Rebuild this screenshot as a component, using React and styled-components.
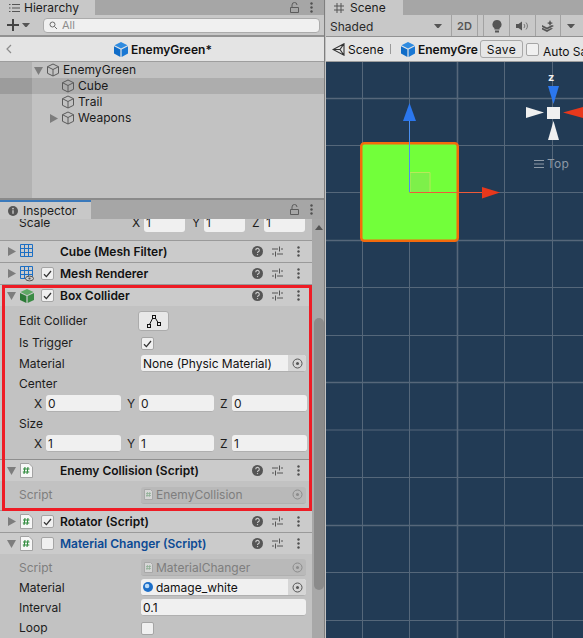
import React from 'react'
import styled, { createGlobalStyle } from 'styled-components'

const Global = createGlobalStyle`
  html, body { margin: 0; padding: 0; background: #c2c2c2; }
  body { font-family: Inter, "Noto Sans", sans-serif; font-size: 12px; color: #111; }
  svg { flex: none; }
`

const Page = styled.div`
  width: 583px;
  height: 638px;
  display: grid;
  grid-template-columns: 325px 1fr;
  overflow: hidden;
`
const LeftPane = styled.div`
  display: flex;
  flex-direction: column;
  height: 638px;
  border-right: 1px solid #7f7f7f;
  box-sizing: content-box;
`
const RightPane = styled.div`
  display: flex;
  flex-direction: column;
  height: 638px;
  margin-left: 1px;
  min-width: 0;
`
const TabStrip = styled.div`
  display: flex;
  align-items: flex-start;
  flex: none;
  height: ${p => p.$h}px;
  background: #a6a6a6;
`
const Tab = styled.div`
  display: flex;
  align-items: center;
  gap: ${p => p.$gap || 4}px;
  width: ${p => p.$w}px;
  height: ${p => p.$h}px;
  box-sizing: border-box;
  padding-left: ${p => p.$pad}px;
  background: #c8c8c8;
  font-size: 12px;
  line-height: 12px;
  color: #1c1c1c;
  border-top: ${p => (p.$active ? '2px solid #3a79bb' : 'none')};
`
const TabTools = styled.div`
  margin-left: auto;
  display: flex;
  align-items: center;
  gap: 11px;
  padding-right: 11px;
  height: 100%;
  color: #555;
`
const Toolbar = styled.div`
  flex: none;
  display: flex;
  align-items: center;
  height: ${p => p.$h}px;
  box-sizing: border-box;
  background: #c8c8c8;
  border-bottom: 2px solid #929292;
`
const PlusBox = styled.div`
  display: flex;
  align-items: center;
  gap: 3px;
  padding-left: 7px;
  width: 43px;
  box-sizing: border-box;
`
const Search = styled.div`
  flex: none;
  width: 277px;
  height: 15px;
  display: flex;
  align-items: center;
  gap: 3px;
  padding-left: 5px;
  box-sizing: border-box;
  background: #f0f0f0;
  border: 1px solid #ababab;
  border-radius: 4px;
  color: #8c8c8c;
  font-size: 11px;
`
const Breadcrumb = styled.div`
  flex: none;
  height: 25px;
  box-sizing: border-box;
  background: #e4e4e4;
  border-bottom: 1px solid #9d9d9d;
  display: flex;
  align-items: center;
`
const CrumbBack = styled.span`
  display: flex;
  padding-left: 6px;
`
const CrumbTitle = styled.div`
  margin-left: 102px;
  display: flex;
  align-items: center;
  gap: 3px;
  font-weight: 600;
  font-size: 12px;
  color: #111;
`
const Tree = styled.div`
  flex: none;
  height: 136px;
  background: linear-gradient(to right, #b2b2b2 32px, #c2c2c2 32px);
`
const TreeRow = styled.div`
  height: 16px;
  display: flex;
  align-items: center;
  padding-left: ${p => p.$indent}px;
  gap: 3px;
  font-size: 12px;
  color: #1a1a1a;
  background: ${p => (p.$selected ? 'linear-gradient(to right, #9c9c9c 32px, #adadad 32px)' : 'transparent')};
`
const TreeLabel = styled.span`
  padding-bottom: 2px;
  letter-spacing: 0.05px;
`
const PaneDivider = styled.div`
  flex: none;
  height: 2px;
  background: #8a8a8a;
`
const InspectorBody = styled.div`
  flex: 1;
  min-height: 0;
  display: grid;
  grid-template-columns: 312px 13px;
  overflow: hidden;
`
const Components = styled.div`
  display: flex;
  flex-direction: column;
  background: #c2c2c2;
`
const Scrollbar = styled.div`
  background: #a8a8a8;
  display: flex;
  flex-direction: column;
  align-items: center;
`
const ScrollArrow = styled.div`
  margin-top: 6px;
  width: 0;
  height: 0;
  border-left: 4px solid transparent;
  border-right: 4px solid transparent;
  border-bottom: 5px solid #555;
`
const ScrollThumb = styled.div`
  margin-top: 88px;
  width: 10px;
  height: 272px;
  border-radius: 5px;
  background: #8b8b8b;
`
const Header = styled.div`
  flex: none;
  height: ${p => (p.$flat ? 21 : 22)}px;
  box-sizing: border-box;
  display: flex;
  align-items: center;
  background: #cbcbcb;
  border-top: ${p => (p.$flat ? 'none' : '1px solid #9a9a9a')};
  margin-top: ${p => p.$mt || 0}px;
`
const Fold = styled.span`
  flex: none;
  width: 20px;
  display: flex;
  justify-content: flex-start;
  padding-left: 7px;
  box-sizing: border-box;
`
const IconSlot = styled.span`
  flex: none;
  width: 21px;
  display: flex;
`
const CheckSlot = styled.span`
  flex: none;
  width: 19px;
  display: flex;
`
const Title = styled.span`
  flex: 1;
  font-weight: 600;
  font-size: 12px;
  color: ${p => p.$color || '#111'};
  white-space: nowrap;
`
const HeaderTools = styled.span`
  display: flex;
  align-items: center;
  gap: 9px;
  padding-right: 7px;
  color: #555;
`
const DotsSlot = styled.span`
  width: 13px;
  display: flex;
  justify-content: center;
`
const Check = styled.span`
  display: inline-flex;
  align-items: center;
  justify-content: center;
  width: 13px;
  height: 13px;
  box-sizing: border-box;
  background: #f0f0f0;
  border: 1px solid #a5a5a5;
  border-radius: 2px;
`
const Row = styled.div`
  flex: none;
  height: ${p => p.$h || 20}px;
  display: flex;
  align-items: center;
  box-sizing: border-box;
  padding-left: 19px;
  color: ${p => (p.$muted ? '#7e7e7e' : '#1c1c1c')};
  margin-top: ${p => p.$mt || 0}px;
`
const Label = styled.span`
  flex: none;
  width: 122px;
  padding-bottom: 2px;
`
const Field = styled.span`
  flex: none;
  width: 165px;
  height: 17px;
  margin-bottom: 1px;
  box-sizing: border-box;
  display: flex;
  align-items: center;
  padding-left: ${p => p.$pad || 2}px;
  background: ${p => (p.$muted ? '#b9b9b9' : '#f0f0f0')};
  border-radius: 3px;
  border-bottom: 1px solid #b0b0b0;
  color: ${p => (p.$muted ? '#7e7e7e' : '#111')};
  overflow: hidden;
  gap: 3px;
`
const Picker = styled.span`
  margin-left: auto;
  flex: none;
  width: 18px;
  height: 100%;
  display: flex;
  align-items: center;
  justify-content: center;
  background: ${p => (p.$muted ? 'transparent' : '#d6d6d6')};
`
const VecRow = styled.div`
  flex: none;
  height: 20px;
  display: flex;
  align-items: center;
  padding-left: 34px;
  color: #1c1c1c;
`
const VecLabel = styled.span`
  flex: none;
  width: 12px;
  padding-bottom: 2px;
`
const VecField = styled.span`
  flex: none;
  width: ${p => p.$w}px;
  margin-right: ${p => p.$mr}px;
  margin-bottom: 1px;
  height: 17px;
  box-sizing: border-box;
  display: flex;
  align-items: center;
  padding-left: 2px;
  background: #f0f0f0;
  border-radius: 3px;
  border-bottom: 1px solid #b0b0b0;
`
const ScaleRow = styled.div`
  flex: none;
  height: 13px;
  display: flex;
  padding-left: 19px;
  color: #1c1c1c;
  line-height: 12px;
`
const ScaleLabel = styled.span`
  width: 115px;
  height: 12px;
  margin-top: -2px;
`
const ScaleField = styled.span`
  flex: none;
  width: ${p => p.$w}px;
  height: 13px;
  margin-right: 7px;
  background: #f0f0f0;
  border-radius: 0 0 3px 3px;
  padding-left: 2px;
  box-sizing: border-box;
`
const ScaleValue = styled.span`
  display: block;
  height: 12px;
  margin-top: -2px;
`
const ScaleAxis = styled.span`
  flex: none;
  width: 12px;
  height: 12px;
  margin-top: -2px;
`
const ColliderButton = styled.span`
  flex: none;
  width: 31px;
  height: 20px;
  margin-left: -3px;
  display: flex;
  align-items: center;
  justify-content: center;
  background: #e8e8e8;
  border: 1px solid #ababab;
  border-radius: 3px;
  box-sizing: border-box;
`
const Separator = styled.div`
  flex: none;
  height: 1px;
  background: #8f8f8f;
  margin-top: 5px;
`
const RedFrame = styled.div`
  position: absolute;
  left: 2px;
  top: 285px;
  width: 310px;
  height: 226px;
  box-sizing: border-box;
  border: 3px solid #ee1c25;
  pointer-events: none;
`
const SceneToolbar = styled.div`
  flex: none;
  height: 22px;
  box-sizing: border-box;
  display: flex;
  align-items: center;
  background: #c8c8c8;
  border-bottom: 1px solid #929292;
`
const ToolCell = styled.span`
  flex: none;
  width: ${p => p.$w}px;
  height: 100%;
  display: flex;
  align-items: center;
  justify-content: ${p => p.$align || 'center'};
  padding-left: ${p => p.$pad || 0}px;
  padding-top: 1px;
  box-sizing: border-box;
  border-right: ${p => (p.$bar ? '1px solid #a2a2a2' : 'none')};
  color: ${p => (p.$bold ? '#555' : '#2a2a2a')};
  font-weight: ${p => (p.$bold ? 600 : 400)};
  font-size: ${p => p.$size || 12}px;
`
const ShadedCaret = styled.span`
  display: flex;
  padding-right: 9px;
`
const SceneCrumb = styled.div`
  flex: none;
  height: 25px;
  box-sizing: border-box;
  display: flex;
  align-items: center;
  background: #e4e4e4;
  border-bottom: 1px solid #9d9d9d;
  white-space: nowrap;
  overflow: hidden;
`
const CrumbIcon = styled.span`
  display: flex;
  flex: none;
  margin-left: ${p => p.$ml}px;
  margin-right: ${p => p.$mr || 0}px;
`
const CrumbLink = styled.span`
  flex: none;
  width: ${p => p.$w}px;
  margin-left: ${p => p.$ml || 0}px;
  font-weight: ${p => (p.$bold ? 600 : 400)};
`
const CrumbBar = styled.span`
  flex: none;
  width: 1px;
  height: 10px;
  background: #9a9a9a;
  margin-left: 8px;
  margin-right: 10px;
`
const SaveButton = styled.span`
  flex: none;
  width: 43px;
  height: 18px;
  margin-left: 2px;
  box-sizing: border-box;
  display: flex;
  align-items: center;
  justify-content: center;
  border: 1px solid #a8a8a8;
  border-radius: 3px;
  background: #e6e6e6;
  letter-spacing: 0.4px;
`
const AutoLabel = styled.span`
  flex: none;
  margin-left: 4px;
  padding-top: 4px;
`
const Canvas = styled.div`
  position: relative;
  flex: 1;
  background: #223b55;
  overflow: hidden;
`
const CanvasArt = styled.svg`
  position: absolute;
  left: 0;
  top: 0;
`
const ViewLabel = styled.span`
  position: absolute;
  left: 208px;
  top: 94px;
  display: flex;
  align-items: center;
  gap: 3px;
  color: #8d99a6;
  letter-spacing: 0.3px;
`
const AxisLetter = styled.span`
  position: absolute;
  left: 222px;
  top: 8px;
  color: #f2f2f2;
  font-size: 11px;
  font-weight: 700;
`

const ListIcon = () => (
  <svg width="12" height="10" viewBox="0 0 12 10" fill="none" stroke="#555" strokeWidth="1">
    <path d="M4 1.5h8M4 5h8M4 8.5h8M1 1.5h1.5M1 5h1.5M1 8.5h1.5" />
  </svg>
)
const Lock = () => (
  <svg width="9" height="11" viewBox="0 0 9 11" fill="none" stroke="#5c5c5c">
    <path d="M.5 5.5h8v5h-8zM2 5.5V3a2.5 2.5 0 0 1 5 0" />
  </svg>
)
const Dots = () => (
  <svg width="3" height="11" viewBox="0 0 3 11" fill="#505050">
    <circle cx="1.5" cy="1.5" r="1.2" />
    <circle cx="1.5" cy="5.5" r="1.2" />
    <circle cx="1.5" cy="9.5" r="1.2" />
  </svg>
)
const Caret = ({ size = 8, color = '#555' }) => (
  <svg width={size} height={size * 0.6} viewBox="0 0 10 6" fill={color}>
    <path d="M0 0h10L5 6z" />
  </svg>
)
const Triangle = ({ open, color = '#7d7d7d' }) => (
  <svg width="9" height="9" viewBox="0 0 9 9" fill={color}>
    {open ? <path d="M0 1h9L4.5 9z" /> : <path d="M1 0l8 4.5L1 9z" />}
  </svg>
)
const BlueCube = () => (
  <svg width="14" height="15" viewBox="0 0 14 15">
    <path d="M7 0l6.5 3.2L7 6.6.5 3.2z" fill="#2f8be0" />
    <path d="M0 4.3l6.4 3.3V15L0 11.6z" fill="#0f6cc8" />
    <path d="M14 4.3L7.6 7.6V15l6.4-3.4z" fill="#1a78d4" />
  </svg>
)
const OutlineCube = () => (
  <svg width="14" height="14" viewBox="0 0 14 14" fill="none" stroke="#5a5a5a" strokeWidth="1">
    <path d="M7 1l5.5 2.7v6.6L7 13 1.5 10.3V3.7zM1.5 3.7L7 6.5l5.5-2.8M7 6.5V13" />
  </svg>
)
const GreenCube = () => (
  <svg width="14" height="14" viewBox="0 0 14 14">
    <path d="M7 0l6.5 3L7 6.2.5 3z" fill="#5fa865" />
    <path d="M0 4l6.4 3.1V14L0 11z" fill="#2c7a37" />
    <path d="M14 4L7.6 7.1V14L14 11z" fill="#3b8c45" />
  </svg>
)
const MeshGrid = ({ eye }) => (
  <svg width="14" height="16" viewBox="0 0 14 16" fill="none" stroke="#1c6fc4" strokeWidth="1">
    <path d="M.5.5h12v12H.5zM.5 4.5h12M.5 8.5h12M4.5.5v12M8.5.5v12" />
    {eye && <ellipse cx="9.5" cy="12.5" rx="4" ry="2.4" fill="#cbcbcb" stroke="#555" />}
    {eye && <circle cx="9.5" cy="12.5" r="1.1" fill="#555" stroke="none" />}
  </svg>
)
const ScriptFile = () => (
  <svg width="13" height="15" viewBox="0 0 13 15">
    <path d="M.5.5h8.5l3.5 3.5v10.5H.5z" fill="#f7f7f7" stroke="#a3a3a3" />
    <path d="M5 4l-1 7M8 4l-1 7M3 6h6.5M2.8 9h6.5" stroke="#2f8a3c" strokeWidth="1.1" fill="none" />
  </svg>
)
const SmallScript = () => (
  <svg width="9" height="11" viewBox="0 0 9 11">
    <path d="M.5.5h6l2 2v8h-8z" fill="#d6d6d6" stroke="#a8a8a8" />
    <path d="M3.5 3l-.6 5M5.8 3l-.6 5M2 4.5h5M2 6.5h5" stroke="#8fb095" strokeWidth=".8" fill="none" />
  </svg>
)
const Help = () => (
  <svg width="11" height="11" viewBox="0 0 11 11">
    <circle cx="5.5" cy="5.5" r="5.5" fill="#555" />
    <path d="M3.7 4.2a1.8 1.8 0 1 1 2.6 1.6c-.6.3-.8.6-.8 1.2" stroke="#cbcbcb" strokeWidth="1.1" fill="none" />
    <circle cx="5.5" cy="8.6" r=".7" fill="#cbcbcb" />
  </svg>
)
const Sliders = () => (
  <svg width="11" height="11" viewBox="0 0 11 11" fill="none" stroke="#555" strokeWidth="1">
    <path d="M0 3h6M9 3h2M7.5 .5v5M0 8h2M5 8h6M3.5 5.5v5" />
  </svg>
)
const HeaderIcons = () => (
  <HeaderTools>
    <Help />
    <Sliders />
    <DotsSlot>
      <Dots />
    </DotsSlot>
  </HeaderTools>
)
const Tick = () => (
  <svg width="9" height="8" viewBox="0 0 9 8" fill="none" stroke="#333" strokeWidth="1.3">
    <path d="M1 4.3L3.4 6.6 8 1" />
  </svg>
)
const PickDot = ({ muted }) => (
  <svg width="11" height="11" viewBox="0 0 11 11" fill="none" stroke={muted ? '#8c8c8c' : '#555'}>
    <circle cx="5.5" cy="5.5" r="4.5" />
    <circle cx="5.5" cy="5.5" r="1.5" fill={muted ? '#8c8c8c' : '#555'} stroke="none" />
  </svg>
)
const ColliderGlyph = () => (
  <svg width="14" height="13" viewBox="0 0 14 13" fill="none" stroke="#111">
    <path d="M2.5 9.5L6 2.5M8 2.5l3 5" />
    <rect x=".5" y="9.5" width="3" height="3" fill="#e8e8e8" />
    <rect x="5.5" y=".5" width="3" height="3" fill="#e8e8e8" />
    <rect x="10.5" y="7.5" width="3" height="3" fill="#e8e8e8" />
  </svg>
)
const MaterialBall = () => (
  <svg width="10" height="10" viewBox="0 0 11 11">
    <circle cx="5.5" cy="5.5" r="5.5" fill="#1d6fc9" />
    <circle cx="4.5" cy="4.5" r="2.5" fill="#bcdcf8" />
  </svg>
)
const PlusGlyph = () => (
  <svg width="12" height="12" viewBox="0 0 12 12" stroke="#444" strokeWidth="2">
    <path d="M6 0v12M0 6h12" />
  </svg>
)
const Magnifier = () => (
  <svg width="10" height="9" viewBox="0 0 10 9" fill="none" stroke="#6a6a6a">
    <circle cx="3.5" cy="3.5" r="2.5" />
    <path d="M5.5 5.5L8 8" />
  </svg>
)
const HashTab = () => (
  <svg width="10" height="10" viewBox="0 0 10 10" stroke="#555" fill="none">
    <path d="M3 0v10M7 0v10M0 3h10M0 7h10" />
  </svg>
)
const InfoTab = () => (
  <svg width="10" height="10" viewBox="0 0 10 10">
    <circle cx="5" cy="5" r="5" fill="#555" />
    <path d="M5 4.3v3.4" stroke="#c8c8c8" strokeWidth="1.4" />
    <circle cx="5" cy="2.6" r=".9" fill="#c8c8c8" />
  </svg>
)
const BackArrow = () => (
  <svg width="6" height="10" viewBox="0 0 6 10" fill="none" stroke="#8c8c8c" strokeWidth="1.2">
    <path d="M5 1L1 5l4 4" />
  </svg>
)
const Bulb = () => (
  <svg width="10" height="13" viewBox="0 0 10 13" fill="#555">
    <path d="M5 0a4.5 4.5 0 0 1 2.6 8.2V9.5H2.4V8.2A4.5 4.5 0 0 1 5 0z" />
    <path d="M3 10.5h4v2H3z" />
  </svg>
)
const Speaker = () => (
  <svg width="13" height="10" viewBox="0 0 13 10" fill="none">
    <path d="M0 3h2.5L6 .5v9L2.5 7H0z" fill="#555" />
    <path d="M8 3a3 3 0 0 1 0 4M10 1.5a5 5 0 0 1 0 7" stroke="#777" />
  </svg>
)
const Stack = () => (
  <svg width="13" height="12" viewBox="0 0 13 12" fill="#555">
    <path d="M0 5l5 2.4L10 5l2 1-7 3.4L0 7z" />
    <path d="M0 8l1 0 4 2 4-2 2 .4L5 12 0 9.5z" />
    <path d="M8 0l1 2.2L11 3 9 4 8 6 7 4 5 3l2-.8z" />
  </svg>
)
const UnityLogo = () => (
  <svg width="13" height="13" viewBox="0 0 13 13" fill="none" stroke="#333" strokeWidth="1.1">
    <path d="M12 .8L1 6.5l11 5.7V.8zM1 6.5h7M12 .8L8 6.5l4 5.7" />
  </svg>
)
const MenuLines = () => (
  <svg width="10" height="8" viewBox="0 0 10 8" stroke="#8d99a6">
    <path d="M0 .5h10M0 4h10M0 7.5h10" />
  </svg>
)

const gridX = [36, 83, 131, 178, 226]
const gridY = [36, 83, 130, 178, 225, 273, 320, 367.5, 415, 463, 510, 558]
const majorX = [131]
const majorY = [36, 178, 320, 463]

// x and y here are canvas coordinates, canvas starts at 326,62
const SceneArt = () => (
  <CanvasArt width="258" height="576" viewBox="0 0 258 576" fill="none">
    {gridX.map(x => (
      <path
        key={x}
        d={`M${x + 0.5} 0V576`}
        stroke={majorX.includes(x) ? '#56677a' : '#55677a'}
        strokeWidth={majorX.includes(x) ? 1.6 : 1}
      />
    ))}
    {gridY.map(y => (
      <path
        key={y}
        d={`M0 ${y + 0.5}H258`}
        stroke={majorY.includes(y) ? '#56677a' : '#55677a'}
        strokeWidth={majorY.includes(y) ? 1.6 : 1}
      />
    ))}
    <rect x="35.25" y="81.25" width="96.5" height="97.5" rx="3" fill="#72ff3a" stroke="#f46a0c" strokeWidth="2.5" />
    <path d="M84 110.5h20v20H84z" fill="#7df04a" stroke="#b9e85a" />
    <path d="M83.5 58v72" stroke="#4b8ff0" />
    <path d="M83.5 130.5H157" stroke="#ee5a3a" />
    <path d="M83.5 41L77 59h13z" fill="#2b77ee" />
    <path d="M174 130.5L156 125v11.500z" fill="#e8381c" />
    <path d="M222 24h11l-5.500 18z" fill="#2b77ee" />
    <path d="M200 45v11l18-5.500z" fill="#f0f0f0" />
    <path d="M257 45v11l-20-5.500z" fill="#e8381c" />
    <path d="M222 78h11l-5.500-19z" fill="#f0f0f0" />
    <rect x="221" y="45" width="13" height="12" fill="#f0f0f0" />
  </CanvasArt>
)

const Vec = ({ values }) => (
  <VecRow>
    <VecLabel>X</VecLabel>
    <VecField $w={75} $mr={6}>{values[0]}</VecField>
    <VecLabel>Y</VecLabel>
    <VecField $w={75} $mr={6}>{values[1]}</VecField>
    <VecLabel>Z</VecLabel>
    <VecField $w={75} $mr={0}>{values[2]}</VecField>
  </VecRow>
)

const CompHeader = ({ open, icon, check, title, color, mt, flat }) => (
  <Header $mt={mt} $flat={flat}>
    <Fold>
      <Triangle open={open} />
    </Fold>
    <IconSlot>{icon}</IconSlot>
    <CheckSlot>
      {check !== undefined && <Check>{check && <Tick />}</Check>}
    </CheckSlot>
    <Title $color={color}>{title}</Title>
    <HeaderIcons />
  </Header>
)

export default function App() {
  return (
    <>
      <Global />
      <Page>
        <LeftPane>
          <TabStrip $h={15}>
            <Tab $w={95} $h={15} $pad={8}>
              <ListIcon />
              Hierarchy
            </Tab>
            <TabTools>
              <Lock />
              <Dots />
            </TabTools>
          </TabStrip>
          <Toolbar $h={22}>
            <PlusBox>
              <PlusGlyph />
              <Caret />
            </PlusBox>
            <Search>
              <Magnifier />
              All
            </Search>
          </Toolbar>
          <Breadcrumb>
            <CrumbBack>
              <BackArrow />
            </CrumbBack>
            <CrumbTitle>
              <BlueCube />
              EnemyGreen*
            </CrumbTitle>
          </Breadcrumb>
          <Tree>
            <TreeRow $indent={34}>
              <Triangle open />
              <OutlineCube />
              <TreeLabel>EnemyGreen</TreeLabel>
            </TreeRow>
            <TreeRow $indent={61} $selected>
              <OutlineCube />
              <TreeLabel>Cube</TreeLabel>
            </TreeRow>
            <TreeRow $indent={61}>
              <OutlineCube />
              <TreeLabel>Trail</TreeLabel>
            </TreeRow>
            <TreeRow $indent={49}>
              <Triangle />
              <OutlineCube />
              <TreeLabel>Weapons</TreeLabel>
            </TreeRow>
          </Tree>
          <PaneDivider />
          <TabStrip $h={19}>
            <Tab $w={91} $h={19} $pad={8} $gap={5} $active>
              <InfoTab />
              Inspector
            </Tab>
            <TabTools>
              <Lock />
              <Dots />
            </TabTools>
          </TabStrip>
          <InspectorBody>
            <Components>
              <ScaleRow>
                <ScaleLabel>Scale</ScaleLabel>
                <ScaleAxis>X</ScaleAxis>
                <ScaleField $w={41}><ScaleValue>1</ScaleValue></ScaleField>
                <ScaleAxis>Y</ScaleAxis>
                <ScaleField $w={41}><ScaleValue>1</ScaleValue></ScaleField>
                <ScaleAxis>Z</ScaleAxis>
                <ScaleField $w={41}><ScaleValue>1</ScaleValue></ScaleField>
              </ScaleRow>
              <CompHeader mt={8} icon={<MeshGrid />} title="Cube (Mesh Filter)" />
              <CompHeader icon={<MeshGrid eye />} check title="Mesh Renderer" />
              <CompHeader open icon={<GreenCube />} check title="Box Collider" />
              <Row $h={24} $mt={3}>
                <Label>Edit Collider</Label>
                <ColliderButton>
                  <ColliderGlyph />
                </ColliderButton>
              </Row>
              <Row $h={21}>
                <Label>Is Trigger</Label>
                <Check>
                  <Tick />
                </Check>
              </Row>
              <Row>
                <Label>Material</Label>
                <Field>
                  None (Physic Material)
                  <Picker>
                    <PickDot />
                  </Picker>
                </Field>
              </Row>
              <Row>
                <Label>Center</Label>
              </Row>
              <Vec values={['0', '0', '0']} />
              <Row>
                <Label>Size</Label>
              </Row>
              <Vec values={['1', '1', '1']} />
              <Separator />
              <CompHeader flat open icon={<ScriptFile />} title="Enemy Collision (Script)" />
              <Row $h={29} $muted>
                <Label>Script</Label>
                <Field $muted $pad={3}>
                  <SmallScript />
                  EnemyCollision
                  <Picker $muted>
                    <PickDot muted />
                  </Picker>
                </Field>
              </Row>
              <CompHeader icon={<ScriptFile />} check title="Rotator (Script)" />
              <CompHeader
                open
                icon={<ScriptFile />}
                check={false}
                title="Material Changer (Script)"
                color="#0c4a94"
              />
              <Row $mt={4} $muted>
                <Label>Script</Label>
                <Field $muted $pad={3}>
                  <SmallScript />
                  MaterialChanger
                  <Picker $muted>
                    <PickDot muted />
                  </Picker>
                </Field>
              </Row>
              <Row>
                <Label>Material</Label>
                <Field>
                  <MaterialBall />
                  damage_white
                  <Picker>
                    <PickDot />
                  </Picker>
                </Field>
              </Row>
              <Row>
                <Label>Interval</Label>
                <Field>0.1</Field>
              </Row>
              <Row>
                <Label>Loop</Label>
                <Check />
              </Row>
            </Components>
            <Scrollbar>
              <ScrollArrow />
              <ScrollThumb />
            </Scrollbar>
          </InspectorBody>
          <RedFrame />
        </LeftPane>
        <RightPane>
          <TabStrip $h={15}>
            <Tab $w={77} $h={15} $pad={8} $gap={6}>
              <HashTab />
              Scene
            </Tab>
          </TabStrip>
          <SceneToolbar>
            <ToolCell $w={126} $align="space-between" $pad={4} $bar>
              <span>Shaded</span>
              <ShadedCaret>
                <Caret />
              </ShadedCaret>
            </ToolCell>
            <ToolCell $w={26} $bar $bold $size={11}>2D</ToolCell>
            <ToolCell $w={6} $bar />
            <ToolCell $w={26} $bar>
              <Bulb />
            </ToolCell>
            <ToolCell $w={26} $bar>
              <Speaker />
            </ToolCell>
            <ToolCell $w={25} $bar>
              <Stack />
            </ToolCell>
            <ToolCell $w={20}>
              <Caret />
            </ToolCell>
          </SceneToolbar>
          <SceneCrumb>
            <CrumbIcon $ml={6} $mr={3}>
              <UnityLogo />
            </CrumbIcon>
            <CrumbLink $w={34}>Scene</CrumbLink>
            <CrumbBar />
            <BlueCube />
            <CrumbLink $w={60} $ml={3} $bold>EnemyGre</CrumbLink>
            <SaveButton>Save</SaveButton>
            <CrumbIcon $ml={3}>
              <Check />
            </CrumbIcon>
            <AutoLabel>Auto Sa</AutoLabel>
          </SceneCrumb>
          <Canvas>
            <SceneArt />
            <AxisLetter>z</AxisLetter>
            <ViewLabel>
              <MenuLines />
              Top
            </ViewLabel>
          </Canvas>
        </RightPane>
      </Page>
    </>
  )
}
